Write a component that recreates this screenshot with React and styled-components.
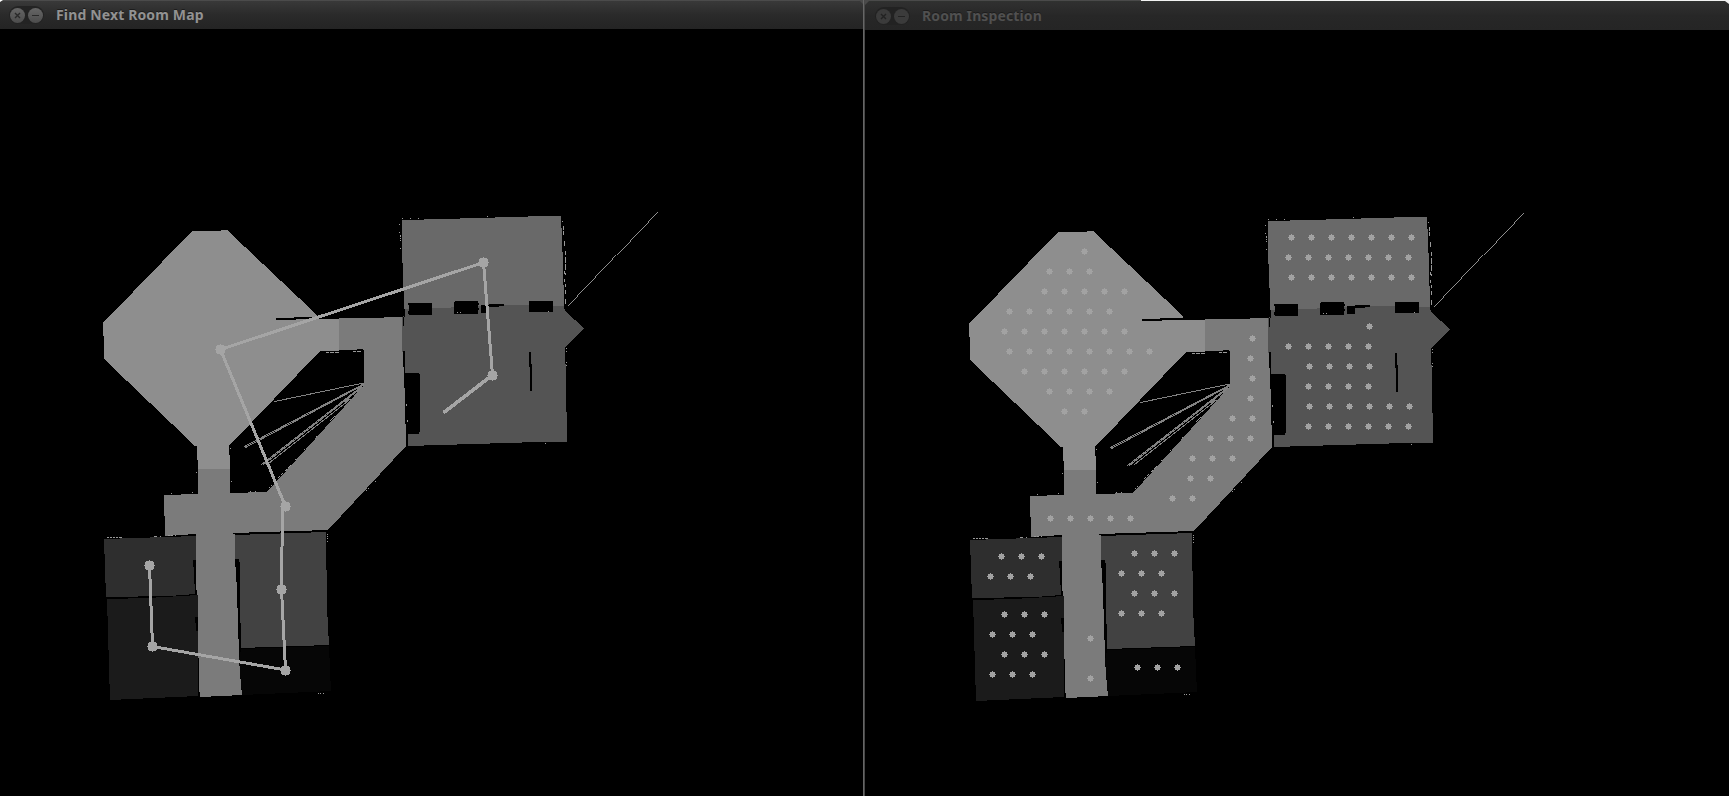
import React from "react";
import styled, { createGlobalStyle } from "styled-components";

const Global = createGlobalStyle`
  html, body, #root { margin: 0; height: 100%; background: #000; overflow: hidden; }
  * { box-sizing: border-box; }
`;

const Desktop = styled.main`
  display: grid;
  grid-template-columns: 863px 2px 864px;
  width: 1729px;
  height: 796px;
  background: #000;
`;

const Divider = styled.div`
  background: linear-gradient(90deg, #666 0 1px, #484848 1px 2px);
`;

const Window = styled.section`
  display: flex;
  flex-direction: column;
  min-width: 0;
  height: 796px;
  background: #000;
`;

const TopEdge = styled.div`
  flex: none;
  height: 1px;
  background: linear-gradient(90deg, #4a4a4a 0 276px, #f2f2f2 276px);
`;

const TitleBar = styled.header`
  display: flex;
  flex: none;
  align-items: center;
  height: 29px;
  padding-left: ${(p) => (p.$active ? 9 : 10)}px;
  border-top: 1px solid ${(p) => (p.$active ? "#4b4b4b" : "#303230")};
  background: ${(p) =>
    p.$active
      ? "linear-gradient(#393939, #2a2a2a 50%, #242424)"
      : "linear-gradient(#303030, #272727 50%, #252525)"};
  clip-path: ${(p) =>
    p.$active
      ? "polygon(3px 0, 859px 0, 863px 4px, 863px 29px, 0 29px, 0 2px)"
      : "polygon(4px 0, 860px 0, 864px 3px, 864px 29px, 0 29px, 0 4px)"};
`;

const TitleWrap = styled.div`
  flex: none;
  background: ${(p) => (p.$active ? "linear-gradient(90deg, #fff 10px, #4a4a4a 10px)" : "linear-gradient(90deg, #4a4a4a 10px, #f2f2f2 10px)")};
`;

const Buttons = styled.div`
  display: flex;
  flex: none;
  align-items: center;
  gap: 3px;
  width: 35px;
  height: 18px;
  padding-left: 1px;
  border-radius: 9px;
  background: ${(p) => (p.$active ? "#232323" : "#222")};
`;

const Button = styled.span`
  display: grid;
  place-items: center;
  width: 15px;
  height: 15px;
  border-radius: 50%;
  background: ${(p) => (p.$active ? "linear-gradient(#666, #4c4c4c)" : "#3b3b3b")};
  color: ${(p) => (p.$active ? "#292929" : "#222")};
  svg { display: block; width: 9px; height: 9px; }
`;

const Title = styled.h1`
  margin: 0 0 0 12px;
  color: ${(p) => (p.$active ? "#929292" : "#505050")};
  font: 700 14px/28px "Noto Sans", "Open Sans", sans-serif;
  letter-spacing: ${(p) => p.$tracking}px;
  text-shadow: 0 -1px 0 #1c1c1c;
  white-space: nowrap;
`;

const Canvas = styled.svg`
  display: block;
  flex: none;
  width: 100%;
  height: ${(p) => p.$height}px;
  shape-rendering: crispEdges;
`;

const rooms = [
  ["#8e8e8e", "192,231 221,231 221,230 227,230 317,315 317,319 339,319 339,351 320,351 229,446 229,455 230,455 230,469 198,469 198,460 197,460 197,446 195,446 104,359 104,336 103,336 103,323"],
  ["#7b7b7b", "339,318 384,318 384,317 402,317 402,352 404,353 404,375 405,400 406,446 328,530 233,533 235,535 235,559 237,590 238,625 239,653 240,673 242,695 200,697 199,687 198,627 197,595 195,573 196,537 196,534 165,536 164,495 198,494 198,469 230,469 230,493 267,492 364,385 364,351 363,349 350,350 339,350"],
  ["#2e2e2e", "104,539 135,538 196,536 196,560 193,560 194,573 195,594 170,596 106,597"],
  ["#1b1b1b", "107,599 148,598 198,595 198,617 195,617 196,628 198,632 198,696 110,700"],
  ["#424242", "235,535 326,532 327,607 329,645 241,648 239,607 239,559 235,559"],
  ["#060606", "241,649 329,646 330,670 331,691 242,695 239,660"],
  ["#696969", "402,220 424,220 424,219 495,218 495,217 561,216 562,240 563,263 564,306 504,305 504,308 404,309 403,263 402,263"],
  ["#545454", "404,309 440,308 504,305 564,306 565,311 584,328 565,348 566,380 567,442 539,442 408,446 408,434 419,434 420,430 420,375 419,373 405,373 404,352 402,352 402,317 404,315"],
];

// x, y, width, height of occupied cells inside the rooms
const obstacles = [
  [276, 318, 20, 2], [294, 317, 23, 2], [317, 318, 22, 1],
  [409, 303, 23, 12], [408, 303, 2, 2], [408, 311, 2, 3],
  [454, 302, 24, 12], [455, 301, 23, 2], [478, 303, 1, 2], [478, 308, 1, 2],
  [481, 305, 8, 8], [489, 304, 15, 2], [489, 305, 10, 2],
  [529, 301, 24, 11], [529, 352, 2, 15], [530, 364, 2, 27],
  [404, 309, 1, 8], [403, 317, 1, 9], [403, 351, 2, 16], [406, 434, 2, 9],
  [195, 560, 1, 34], [237, 559, 2, 30], [196, 617, 2, 14],
];

// light, isolated cells along the scanned walls
const specks = [
  [402, 218, 1, 1], [410, 218, 1, 1], [418, 218, 1, 1], [487, 216, 1, 1],
  [399, 224, 1, 1], [399, 232, 1, 1], [400, 235, 1, 2], [400, 238, 1, 1], [400, 240, 1, 1], [400, 248, 1, 1],
  [562, 221, 1, 1], [563, 226, 1, 4], [563, 231, 1, 4], [564, 241, 1, 5], [565, 251, 1, 4],
  [565, 257, 1, 6], [565, 264, 1, 6], [564, 271, 1, 3], [565, 273, 1, 2], [564, 279, 1, 3], [565, 284, 1, 3],
  [565, 290, 1, 4], [565, 299, 1, 5], [566, 348, 1, 1], [566, 351, 1, 1], [566, 362, 1, 1], [566, 365, 1, 1],
  [545, 443, 1, 1],
  [326, 352, 3, 1], [330, 352, 4, 1], [335, 352, 4, 1], [353, 351, 3, 1], [357, 351, 4, 1],
  [406, 404, 1, 2], [407, 420, 1, 2],
  [230, 448, 1, 1], [231, 481, 1, 1], [196, 472, 1, 1], [171, 493, 1, 1], [192, 492, 1, 1],
  [250, 491, 1, 1], [255, 491, 1, 1], [304, 449, 1, 1], [316, 436, 1, 1],
  [330, 420, 1, 1], [331, 419, 1, 1], [332, 418, 1, 1], [333, 417, 1, 1], [334, 416, 1, 1],
  [269, 487, 1, 1], [271, 485, 1, 1], [295, 459, 1, 1],
  [366, 490, 1, 1], [368, 488, 1, 1], [375, 481, 1, 1],
  [107, 537, 2, 1], [110, 537, 2, 1], [113, 537, 2, 1], [116, 537, 2, 1], [119, 537, 3, 1],
  [154, 536, 3, 1], [160, 536, 1, 1], [168, 535, 2, 1], [171, 535, 2, 1], [175, 535, 1, 1],
  [327, 534, 1, 1], [327, 536, 1, 1], [327, 538, 1, 1], [327, 541, 1, 1],
  [318, 693, 1, 1], [320, 693, 1, 1], [323, 693, 1, 1],
  [457, 312, 1, 1], [460, 312, 1, 1], [548, 311, 1, 1],
];

const rays = [
  "M363.5 383L274.5 401.5", "M363.5 384L244.5 446.5", "M363.5 385L245.5 447.5",
  "M363.5 385L261.5 464.5", "M362.5 387L263.5 464.5", "M350.5 399L268.5 463.5",
  "M348.5 399L341.5 406.5",
];

const route = "M492.5 375L483.5 262.5L220.5 349.5L284 503L282.5 508L281.5 589L285.5 670L152.5 646.5L149.5 565";
const stops = [[483, 262], [492, 375], [220, 349], [285, 506], [281, 589], [285, 670], [152, 646], [149, 565]];

// x of the first point, y, number of points 20px apart
const pointRows = [
  [218, 250, 1], [183, 270, 3], [178, 290, 5], [143, 310, 6], [138, 330, 7],
  [143, 350, 8], [158, 370, 6], [183, 390, 4], [198, 410, 2],
  [386, 337, 1], [384, 357, 1], [386, 377, 1], [384, 397, 1], [366, 417, 2],
  [344, 437, 3], [326, 457, 3], [324, 477, 2], [306, 497, 2], [184, 517, 5],
  [224, 637, 1], [224, 677, 1],
  [135, 555, 3], [124, 575, 3],
  [138, 613, 3], [126, 633, 3], [138, 653, 3], [126, 673, 3],
  [268, 552, 3], [255, 572, 3], [268, 592, 3], [255, 612, 3], [271, 666, 3],
  [425, 236, 7], [422, 256, 7], [425, 276, 7],
  [503, 325, 1], [422, 345, 5], [443, 365, 4], [442, 385, 4], [443, 405, 6], [442, 425, 6],
];

const point = (x, y) =>
  `M${x - 2} ${y - 2}h2v-1h1v1h2v2h1v1h-1v2h-2v1h-1v-1h-2v-2h-1v-1h1z`;

const stop = (x, y) =>
  `M${x - 3} ${y - 4}h3v-1h1v1h3v1h1v3h1v1h-1v3h-1v1h-3v1h-1v-1h-3v-1h-1v-3h-1v-1h1v-3h1z`;

function FloorPlan() {
  return (
    <>
      {rooms.map(([fill, points]) => <polygon key={points} fill={fill} points={points} />)}
      <g fill="none" stroke="#000" strokeWidth="1">
        <path d="M233 534L328 531M239 560L239.5 610L241 648" />
      </g>
      <g fill="#000">
        {obstacles.map(([x, y, w, h], i) => <rect key={i} x={x} y={y} width={w} height={h} />)}
      </g>
      <g fill="none" stroke="#828282">
        {rays.map((d) => <path key={d} d={d} />)}
        <path stroke="#a0a0a0" strokeWidth="0.9" d="M568.5 305.5L657.5 211.5" />
        <path stroke="#999" strokeDasharray="3 2" d="M290.5 465.5L275.5 480.5" />
      </g>
      <g fill="#999">
        {specks.map(([x, y, w, h], i) => <rect key={i} x={x} y={y} width={w} height={h} />)}
      </g>
    </>
  );
}

function RouteLayer() {
  return (
    <g fill="#a5a5a5">
      <g fill="none" stroke="#a5a5a5" strokeLinejoin="round" strokeLinecap="round">
        <path d={route} strokeWidth="3" />
        <path d="M444.5 412L492.5 375" strokeWidth="3.6" />
      </g>
      {stops.map(([x, y]) => <path key={`${x}-${y}`} d={stop(x, y)} />)}
    </g>
  );
}

function PointLayer() {
  return (
    <g fill="#a2a2a2">
      {pointRows.flatMap(([x, y, n]) =>
        Array.from({ length: n }, (_, i) => <path key={`${x}-${y}-${i}`} d={point(x + i * 20, y)} />)
      )}
    </g>
  );
}

function TitleRow({ active = false, tracking, children }) {
  return (
    <TitleWrap $active={active}>
      <TitleBar $active={active}>
        <Buttons $active={active}>
          <Button $active={active}>
            <svg viewBox="0 0 9 9" fill="none" stroke="currentColor" strokeWidth="1.4"><path d="M2 2l5 5M7 2l-5 5" /></svg>
          </Button>
          <Button $active={active}>
            <svg viewBox="0 0 9 9" fill="none" stroke="currentColor" strokeWidth="1.2"><path d="M1 4.5h7" /></svg>
          </Button>
        </Buttons>
        <Title $active={active} $tracking={tracking}>{children}</Title>
      </TitleBar>
    </TitleWrap>
  );
}

export default function App() {
  return (
    <>
      <Global />
      <Desktop>
        <Window>
          <TitleRow active tracking={0.14}>Find Next Room Map</TitleRow>
          <Canvas $height={767} viewBox="0 29 863 767">
            <FloorPlan />
            <RouteLayer />
          </Canvas>
        </Window>
        <Divider />
        <Window>
          <TopEdge />
          <TitleRow tracking={0.12}>Room Inspection</TitleRow>
          <Canvas $height={766} viewBox="-1 29 864 766">
            <FloorPlan />
            <PointLayer />
          </Canvas>
        </Window>
      </Desktop>
    </>
  );
}
